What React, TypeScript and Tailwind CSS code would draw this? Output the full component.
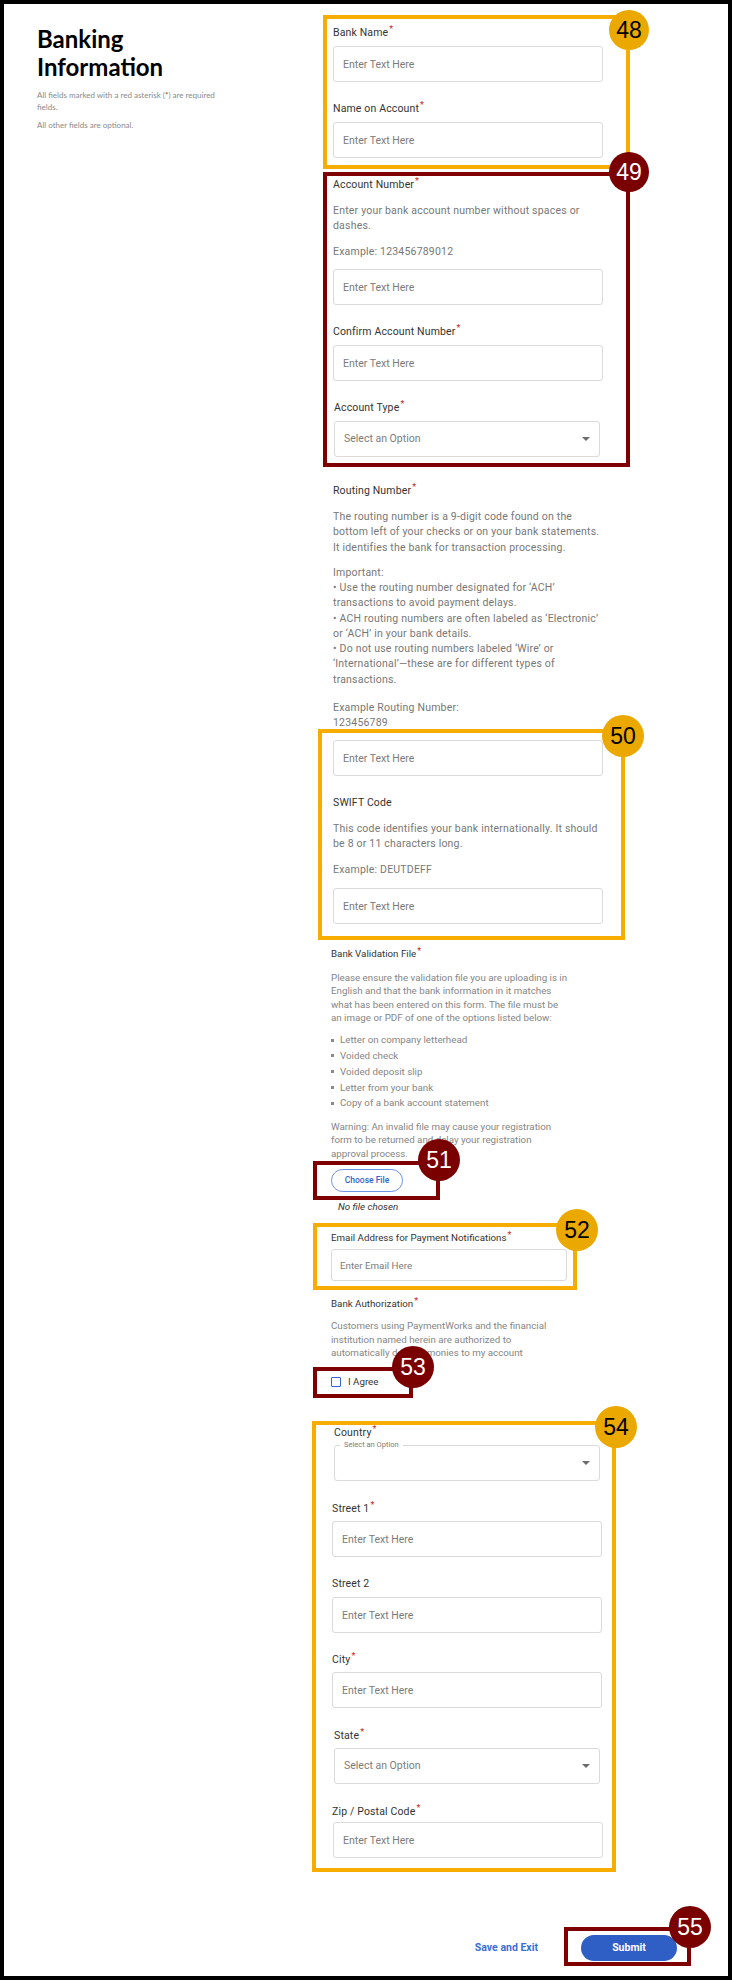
import React from 'react';

// Annotation overlays: boxes drawn on top of the screenshot
const boxes = [
  { n: '48', tone: 'gold', left: 323, top: 15, w: 307, h: 154, bx: 629, by: 30, d: 40 },
  { n: '49', tone: 'red', left: 323, top: 172, w: 307, h: 295, bx: 629, by: 172, d: 40 },
  { n: '50', tone: 'gold', left: 318, top: 729, w: 307, h: 211, bx: 623, by: 736, d: 42 },
  { n: '51', tone: 'red', left: 313, top: 1161, w: 127, h: 39, bx: 439, by: 1160, d: 42 },
  { n: '52', tone: 'gold', left: 313, top: 1223, w: 264, h: 67, bx: 577, by: 1230, d: 42 },
  { n: '53', tone: 'red', left: 313, top: 1367, w: 100, h: 31, bx: 413, by: 1367, d: 42 },
  { n: '54', tone: 'gold', left: 312, top: 1421, w: 304, h: 451, bx: 616, by: 1427, d: 42 },
  { n: '55', tone: 'red', left: 564, top: 1927, w: 127, h: 39, bx: 690, by: 1927, d: 42 },
];

const Req = () => (
  <span className="ml-[1px] align-top text-[9px] leading-none text-[#c62828]">*</span>
);

const Label: React.FC<{ children: React.ReactNode; req?: boolean; className?: string }> = ({
  children,
  req,
  className = '',
}) => (
  <div className={`text-[10.5px] leading-[15px] tracking-[0.15px] text-[#333] ${className}`}>
    {children}
    {req && <Req />}
  </div>
);

const TextInput: React.FC<{ className?: string; placeholder?: string }> = ({
  className = '',
  placeholder = 'Enter Text Here',
}) => (
  <input
    placeholder={placeholder}
    className={`block h-[36px] w-full rounded-[3px] border border-[#dadada] bg-white px-[9px] text-[10.5px] text-[#333] outline-none placeholder:text-[#7b7b7b] ${className}`}
  />
);

const Caret = () => (
  <svg width="8" height="4" viewBox="0 0 8 4" className="shrink-0">
    <path d="M0 0h8L4 4z" fill="#6b6b6b" />
  </svg>
);

const SelectBox: React.FC<{ className?: string }> = ({ className = '' }) => (
  <div
    className={`flex h-[36px] items-center justify-between rounded-[3px] border border-[#dadada] pl-[9px] pr-[9px] text-[10.5px] text-[#7b7b7b] ${className}`}
  >
    <span>Select an Option</span>
    <Caret />
  </div>
);

const Help: React.FC<{ lines: string[]; className?: string }> = ({ lines, className = '' }) => (
  <div className={`text-[10.5px] tracking-[0.2px] text-[#777] ${className}`}>
    {lines.map((l, i) => (
      <div key={i} className="whitespace-nowrap">
        {l}
      </div>
    ))}
  </div>
);

const Small: React.FC<{ lines: string[]; className?: string }> = ({ lines, className = '' }) => (
  <div className={`text-[9.75px] leading-[13.5px] text-[#858585] ${className}`}>
    {lines.map((l, i) => (
      <div key={i} className="whitespace-nowrap">
        {l}
      </div>
    ))}
  </div>
);

const docs = [
  'Letter on company letterhead',
  'Voided check',
  'Voided deposit slip',
  'Letter from your bank',
  'Copy of a bank account statement',
];

export default function App() {
  return (
    <div className="relative h-[1980px] w-[732px] bg-white font-['Roboto',sans-serif]">
      <div className="flex h-full flex-col border-4 border-black">
        <div className="flex">
          {/* Left intro */}
          <div className="w-[329px] shrink-0 pl-[33px] pt-[21px] font-['Lato',sans-serif]">
            <h1 className="text-[24px] font-bold leading-[28px] text-black">
              Banking
              <br />
              Information
            </h1>
            <p className="mt-[8px] text-[8px] leading-[12px] text-[#8a8a8a]">
              All fields marked with a red asterisk (<span className="text-[#c62828]">*</span>) are required
              <br />
              fields.
            </p>
            <p className="mt-[6px] text-[8px] leading-[12px] text-[#8a8a8a]">All other fields are optional.</p>
          </div>

          {/* Form column */}
          <div className="w-[270px] shrink-0 pt-[21px]">
            <Label req>Bank Name</Label>
            <TextInput className="mt-[6px]" />
            <Label req className="mt-[19px]">Name on Account</Label>
            <TextInput className="mt-[6px]" />

            <Label req className="mt-[19px]">Account Number</Label>
            <Help
              className="mt-[11px] leading-[15px]"
              lines={['Enter your bank account number without spaces or', 'dashes.']}
            />
            <Help className="mt-[11px] leading-[15px]" lines={['Example: 123456789012']} />
            <TextInput className="mt-[10px]" />
            <Label req className="mt-[19px]">Confirm Account Number</Label>
            <TextInput className="mt-[6px]" />
            <Label req className="mt-[19px] pl-[1px]">Account Type</Label>
            <SelectBox className="ml-[1px] mt-[6px] w-[266px]" />

            <Label req className="mt-[26px]">Routing Number</Label>
            <Help
              className="mt-[11px] leading-[15.25px]"
              lines={[
                'The routing number is a 9-digit code found on the',
                'bottom left of your checks or on your bank statements.',
                'It identifies the bank for transaction processing.',
              ]}
            />
            <Help
              className="mt-[10px] leading-[15.25px]"
              lines={[
                'Important:',
                '• Use the routing number designated for ‘ACH’',
                'transactions to avoid payment delays.',
                '• ACH routing numbers are often labeled as ‘Electronic’',
                'or ‘ACH’ in your bank details.',
                '• Do not use routing numbers labeled ‘Wire’ or',
                '‘International’—these are for different types of',
                'transactions.',
              ]}
            />
            <Help
              className="mt-[13px] leading-[15.25px]"
              lines={['Example Routing Number:', '123456789']}
            />
            <TextInput className="mt-[10px]" />

            <Label className="mt-[19px]">SWIFT Code</Label>
            <Help
              className="mt-[11px] leading-[15px]"
              lines={['This code identifies your bank internationally. It should', 'be 8 or 11 characters long.']}
            />
            <Help className="mt-[11px] leading-[15px]" lines={['Example: DEUTDEFF']} />
            <TextInput className="mt-[11px]" />

            {/* Validation file, email and authorization */}
            <div className="-ml-[2px] w-[237px]">
              <div className="mt-[23px] text-[9.75px] leading-[13.5px] text-[#333]">
                Bank Validation File
                <Req />
              </div>
              <Small
                className="mt-[10px]"
                lines={[
                  'Please ensure the validation file you are uploading is in',
                  'English and that the bank information in it matches',
                  'what has been entered on this form. The file must be',
                  'an image or PDF of one of the options listed below:',
                ]}
              />
              <ul className="mt-[7.5px] text-[9.75px] leading-[15.75px] text-[#858585]">
                {docs.map((d) => (
                  <li key={d} className="flex items-center">
                    <span className="mr-[6px] h-[3px] w-[3px] bg-[#8a8a8a]" />
                    {d}
                  </li>
                ))}
              </ul>
              <Small
                className="mt-[8.5px]"
                lines={[
                  'Warning: An invalid file may cause your registration',
                  'form to be returned and delay your registration',
                  'approval process.',
                ]}
              />
              <button className="mt-[9.25px] flex h-[23px] w-[72px] items-center justify-center rounded-full border border-[#6b93e2] text-[8.5px] font-medium text-[#2f63c9]">
                Choose File
              </button>
              <div className="ml-[7px] mt-[8px] text-[9.75px] italic leading-[13.5px] text-[#333]">
                No file chosen
              </div>

              <div className="mt-[17.5px] text-[9.75px] leading-[13.5px] text-[#333]">
                Email Address for Payment Notifications
                <Req />
              </div>
              <input
                placeholder="Enter Email Here"
                className="mt-[4.25px] block h-[32px] w-[236px] rounded-[3px] border border-[#dadada] px-[8px] text-[9.75px] outline-none placeholder:text-[#7b7b7b]"
              />

              <div className="mt-[16.25px] text-[9.75px] leading-[13.5px] text-[#333]">
                Bank Authorization
                <Req />
              </div>
              <Small
                className="mt-[8.5px]"
                lines={[
                  'Customers using PaymentWorks and the financial',
                  'institution named herein are authorized to',
                  'automatically deposit monies to my account',
                ]}
              />
              <label className="mt-[15.25px] flex h-[14px] items-center text-[9.75px] text-[#333]">
                <span className="h-[10px] w-[10px] rounded-[1px] border-[1.5px] border-[#3565cf] bg-white" />
                <span className="ml-[7px]">I Agree</span>
              </label>
            </div>

            {/* Address */}
            <Label req className="mt-[35.5px] pl-[1px]">Country</Label>
            <div className="relative ml-[1px] mt-[5.5px] flex h-[36px] w-[266px] items-center justify-end rounded-[3px] border border-[#dadada] pr-[9px]">
              <span className="absolute -top-[6px] left-[5px] bg-white px-[4px] text-[7.5px] leading-[10px] text-[#7b7b7b]">
                Select an Option
              </span>
              <Caret />
            </div>
            <Label req className="mt-[19.5px] -ml-[1px]">Street 1</Label>
            <TextInput className="mt-[5.5px] -ml-[1px]" />
            <Label className="mt-[18.5px] -ml-[1px]">Street 2</Label>
            <TextInput className="mt-[6.5px] -ml-[1px]" />
            <Label req className="mt-[18.5px] -ml-[1px]">City</Label>
            <TextInput className="mt-[5.5px] -ml-[1px]" />
            <Label req className="mt-[19.5px] pl-[1px]">State</Label>
            <SelectBox className="ml-[1px] mt-[5.5px] w-[266px]" />
            <Label req className="mt-[19.5px] -ml-[1px]">Zip / Postal Code</Label>
            <TextInput className="mt-[3.5px]" />
          </div>
        </div>

        {/* Footer actions */}
        <div className="mt-auto flex items-center justify-end pb-[15px] pr-[51px]">
          <button className="text-[10.5px] font-bold text-[#3a6fd4]">Save and Exit</button>
          <button className="ml-[43px] h-[26px] w-[96px] rounded-full bg-[#2f5ec4] text-[10.5px] font-bold text-white">
            Submit
          </button>
        </div>
      </div>

      {/* Callout overlays */}
      {boxes.map((b) => (
        <React.Fragment key={b.n}>
          <div
            className={`pointer-events-none absolute border-4 ${
              b.tone === 'gold' ? 'border-[#f6ad00]' : 'border-[#7e0000]'
            }`}
            style={{ left: b.left, top: b.top, width: b.w, height: b.h }}
          />
          <div
            className={`pointer-events-none absolute flex items-center justify-center rounded-full font-['Liberation_Sans',Arial,sans-serif] text-[23px] leading-none ${
              b.tone === 'gold' ? 'bg-[#eba900] text-black' : 'bg-[#7a0000] text-white'
            }`}
            style={{ left: b.bx - b.d / 2, top: b.by - b.d / 2, width: b.d, height: b.d }}
          >
            {b.n}
          </div>
        </React.Fragment>
      ))}
    </div>
  );
}
